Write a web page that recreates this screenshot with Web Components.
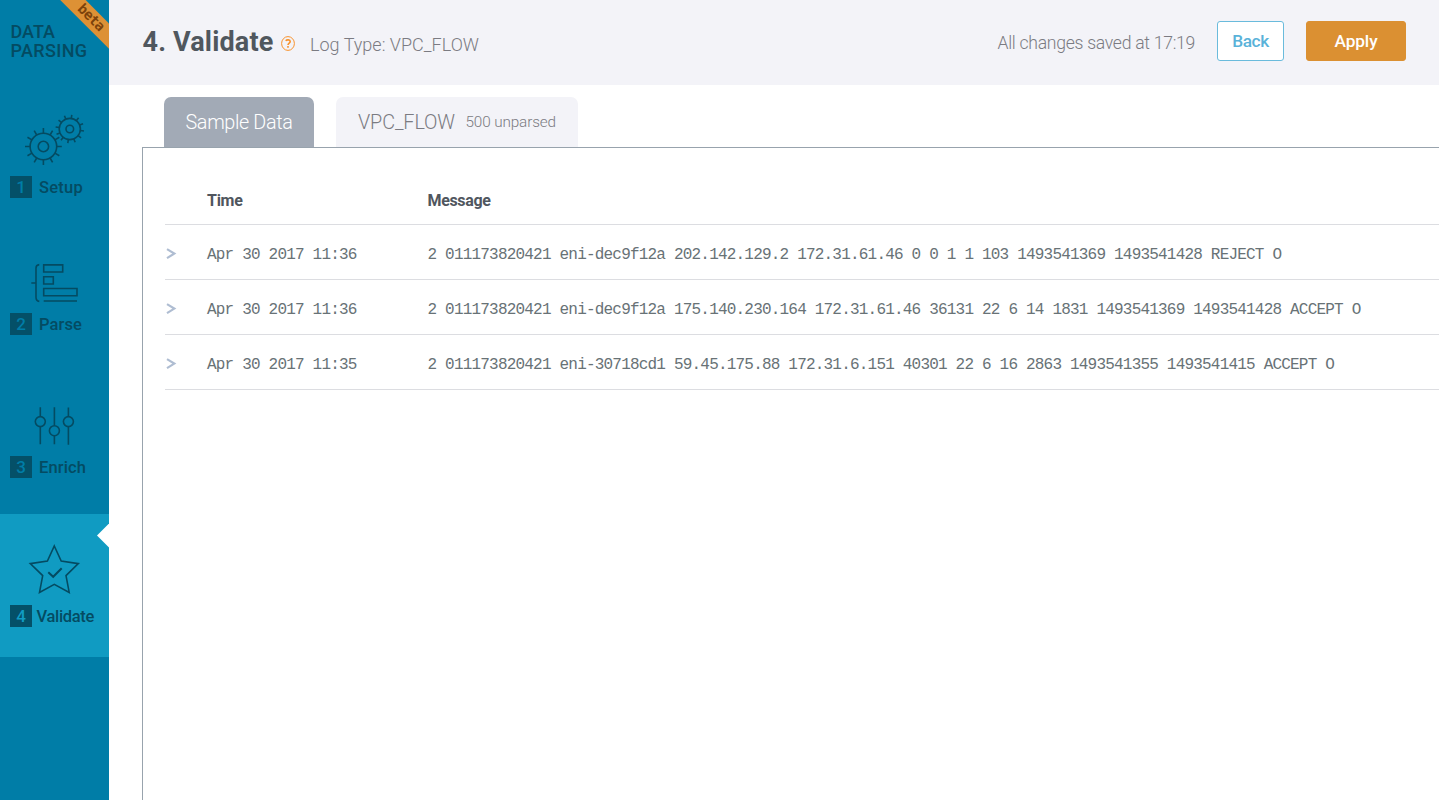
<!DOCTYPE html>
<html lang="en">
<head>
<meta charset="utf-8">
<title>Data Parsing - Validate</title>
<style>
html,body{margin:0;height:100%;background:#fff;overflow:hidden}
body{font-family:Roboto,"Open Sans",sans-serif}
</style>
</head>
<body>
<parsing-app></parsing-app>
<script>
function define(name, html, setup) {
  const tpl = document.createElement('template');
  tpl.innerHTML = html;
  customElements.define(name, class extends HTMLElement {
    connectedCallback() {
      if (this.shadowRoot) return;
      this.attachShadow({ mode: 'open' }).appendChild(tpl.content.cloneNode(true));
      if (setup) setup(this, this.shadowRoot);
    }
  });
}

/* Text run tracked to a given width: size (px), span (px), weight */
define('track-text', `<style>
:host{display:inline-block;white-space:nowrap;line-height:1.2}
span{display:inline-block}
</style><span><slot></slot></span>`, (el, root) => {
  const s = root.querySelector('span');
  el.style.fontSize = el.getAttribute('size') + 'px';
  el.style.fontWeight = el.getAttribute('weight') || 400;
  const want = +el.getAttribute('span');
  const n = el.textContent.length;
  const gap = (want - s.getBoundingClientRect().width) / n;
  s.style.letterSpacing = gap.toFixed(3) + 'px';
  el.style.width = want + 'px';
});

const teeth = (cx, cy, r1, r2, off) => {
  let d = '';
  for (let i = 0; i < 12; i++) {
    const a = (off + i * 30) * Math.PI / 180, c = Math.cos(a), s = Math.sin(a);
    d += `M${(cx + r1 * c).toFixed(2)} ${(cy + r1 * s).toFixed(2)}L${(cx + r2 * c).toFixed(2)} ${(cy + r2 * s).toFixed(2)}`;
  }
  return d;
};
const icons = {
  setup: ['0 85 109 91', `<circle cx="43.4" cy="146.5" r="13.3"/><circle cx="43.4" cy="146.5" r="5.2"/><path d="${teeth(43.4,146.5,13.3,18.4,0)}"/><circle cx="69.8" cy="129" r="10.6"/><circle cx="69.8" cy="129" r="3.8"/><path d="${teeth(69.8,129,10.6,14.3,8)}"/>`],
  parse: ['0 229 109 84', `<path d="M39.3 264.6C36.7 264.8 36 265.9 36 268V297.2C36 299.8 36.7 301 39.3 301.4M31.3 283H36M43.7 301H77"/><path d="M43.7 264.9H62.7V272H43.7ZM43.7 276.8H53.3V284H43.7ZM43.7 288.5H77V295.7H43.7Z"/>`],
  enrich: ['0 371 109 85', `<path d="M40.3 407.2V416.6M40.3 426.6V444.3M54.4 407.2V425.6M54.4 435.6V444.3M68.4 407.6V416.6M68.4 426.6V444.7"/><circle cx="40.3" cy="421.6" r="5"/><circle cx="54.4" cy="430.7" r="5"/><circle cx="68.4" cy="421.6" r="5"/>`],
  validate: ['0 514 109 91', `<path d="M54.3 546L61.2 561.1L78.3 563.6L66 575.6L69.2 592.4L54.3 584.4L39.5 592.4L42.7 575.6L30.3 563.6L47.4 561.1Z"/><path stroke-width="2" d="M48.3 572.3L53.2 576.8L61.7 568.2"/>`]
};

define('step-item', `<style>
:host{display:flex;flex-direction:column;box-sizing:border-box;position:relative;color:#044b62}
:host([active]){background:#109bc2;--num:#109bc2}
svg{display:block;width:109px;fill:none;stroke:#044b62;stroke-width:1.6}
.row{display:flex;align-items:center;padding-left:10px;height:22px}
b{width:22px;height:22px;background:#045068;color:var(--num,#007da7);font:500 17px/22px Roboto,sans-serif;text-align:center}
.name{margin:2px 0 0 7px}
:host([active]) .name{margin-left:4.5px}
.notch{display:none;position:absolute;right:0;top:9.5px;width:12px;height:24px;background:#fff;clip-path:polygon(100% 0,0 50%,100% 100%)}
:host([active]) .notch{display:block}
</style><svg></svg><div class="row"><b></b><div class="name"><slot></slot></div></div><i class="notch"></i>`, (el, root) => {
  const [vb, body] = icons[el.getAttribute('icon')];
  const svg = root.querySelector('svg');
  svg.setAttribute('viewBox', vb);
  svg.style.height = vb.split(' ')[3] + 'px';
  svg.innerHTML = body;
  root.querySelector('b').textContent = el.getAttribute('num');
});

define('side-nav', `<style>
:host{display:grid;grid-template-rows:85px 144px 142px 143px 143px 1fr;background:#007da7;width:109px;position:relative;overflow:hidden}
.brand{padding:22px 0 0 10.5px;color:#044b62;display:flex;flex-direction:column}
.brand track-text{line-height:19px}
.ribbon{position:absolute;width:90px;height:17.5px;left:46.3px;top:8.5px;transform:rotate(45deg);background:#dd9135;color:#7c420b;font:bold 14px/16px "DejaVu Sans Mono",monospace;text-align:center;letter-spacing:-.5px}
</style>
<div class="brand"><track-text size="18" span="44.5" weight="500">DATA</track-text><track-text size="18" span="77" weight="500">PARSING</track-text></div>
<step-item icon="setup" num="1"><track-text size="16.5" span="44" weight="500">Setup</track-text></step-item>
<step-item icon="parse" num="2"><track-text size="16.5" span="43" weight="500">Parse</track-text></step-item>
<step-item icon="enrich" num="3"><track-text size="16.5" span="47" weight="500">Enrich</track-text></step-item>
<step-item icon="validate" num="4" active><track-text size="16.5" span="57.5" weight="500">Validate</track-text></step-item>
<div class="ribbon">beta</div>`);

define('app-button', `<style>
:host{display:flex;align-items:center;justify-content:center;box-sizing:border-box;height:40px;width:67px;border:1px solid #6abbdc;border-radius:3px;background:#fff;color:#59b2d9}
:host([primary]){width:100px;background:#db9032;border-color:#db9032;color:#fff}
</style><slot></slot>`);

define('help-icon', `<style>
:host{display:block;width:14px;height:15px}
svg{display:block;fill:none;stroke:#f8922d}
</style><svg width="14" height="15" viewBox="0 0 14 15"><ellipse cx="7" cy="7.5" rx="6.4" ry="6.9"/><path stroke-width="1.6" d="M4.7 4.7C5.8 3.5 9.2 3.4 9.2 5.5C9.2 7.1 7 7 7 8.9M7 10.1V11.7"/></svg>`);

define('top-bar', `<style>
:host{display:flex;height:85px;background:#f3f3f8;box-sizing:border-box;padding:0 33px 0 33.5px;align-items:flex-start;color:#7b7b82}
.t{color:#50575e;margin-top:26px}
help-icon{margin:36px 0 0 7px}
.l{margin:34px 0 0 15.5px}
.s{margin:33px 22px 0 auto}
app-button{margin-top:21px}
app-button+app-button{margin-left:22px}
</style>
<track-text class="t" size="27" span="131" weight="700">4. Validate</track-text>
<help-icon></help-icon>
<track-text class="l" size="18" span="169" weight="300">Log Type: VPC_FLOW</track-text>
<track-text class="s" size="17.6" span="197.5" weight="300">All changes saved at 17:19</track-text>
<app-button><track-text size="17.3" span="36.5" weight="500">Back</track-text></app-button>
<app-button primary><track-text size="17.3" span="43" weight="500">Apply</track-text></app-button>`);

define('data-tab', `<style>
:host{display:flex;align-items:center;box-sizing:border-box;height:50px;padding:1px 21.5px 0;border-radius:7px 7px 0 0;background:#f3f3f8;color:#7b7b82;gap:10.5px}
:host(:not([selected])){padding:1px 22px 0}
:host([selected]){background:#a2aab6;color:#fff}
</style><slot></slot>`);

define('log-row', `<style>
:host{display:grid;grid-template-columns:42px 220.5px 1fr;height:54px;border-bottom:1px solid #dcdde1;align-items:center;font:16px/20px "Liberation Mono",monospace;letter-spacing:-.8px;color:#687276;white-space:pre}
svg{display:block;margin:3px 0 0 1px;fill:none;stroke:#afbdd2;stroke-width:2.2}
.c{padding-top:6px}
</style><svg width="12" height="12" viewBox="0 0 12 12"><path d="M1 1.1L8.3 5.6L1 10.1"/></svg><div class="c"><slot name="time"></slot></div><div class="c"><slot></slot></div>`);

define('log-table', `<style>
:host{display:block;padding-left:22px}
.head{display:grid;grid-template-columns:42px 220.5px 1fr;height:76px;border-bottom:1px solid #dcdde1;color:#50565e;box-sizing:content-box}
.head track-text{margin-top:43px}
</style><div class="head"><span></span><track-text size="16" span="35.5" weight="700">Time</track-text><track-text size="16" span="63" weight="700">Message</track-text></div><slot></slot>`);

define('parsing-app', `<style>
:host{display:grid;grid-template-columns:109px 1fr;width:1439px;height:800px;overflow:hidden}
main{display:grid;grid-template-rows:85px 62px 1fr;min-width:0}
.tabs{display:flex;align-items:flex-end;padding-left:55px;gap:22px}
.panel{margin-left:33px;border:solid #98a3ad;border-width:1px 0 0 1px;min-width:0}
</style>
<side-nav></side-nav>
<main>
<top-bar></top-bar>
<div class="tabs">
<data-tab selected><track-text size="19.8" span="107" weight="300">Sample Data</track-text></data-tab>
<data-tab><track-text size="19.8" span="97" weight="300">VPC_FLOW</track-text><track-text size="15.3" span="90.5" weight="300">500 unparsed</track-text></data-tab>
</div>
<div class="panel"><log-table>
<log-row><span slot="time">Apr 30 2017 11:36</span>2 011173820421 eni-dec9f12a 202.142.129.2 172.31.61.46 0 0 1 1 103 1493541369 1493541428 REJECT O</log-row>
<log-row><span slot="time">Apr 30 2017 11:36</span>2 011173820421 eni-dec9f12a 175.140.230.164 172.31.61.46 36131 22 6 14 1831 1493541369 1493541428 ACCEPT O</log-row>
<log-row><span slot="time">Apr 30 2017 11:35</span>2 011173820421 eni-30718cd1 59.45.175.88 172.31.6.151 40301 22 6 16 2863 1493541355 1493541415 ACCEPT O</log-row>
</log-table></div>
</main>`);
</script>
</body>
</html>
